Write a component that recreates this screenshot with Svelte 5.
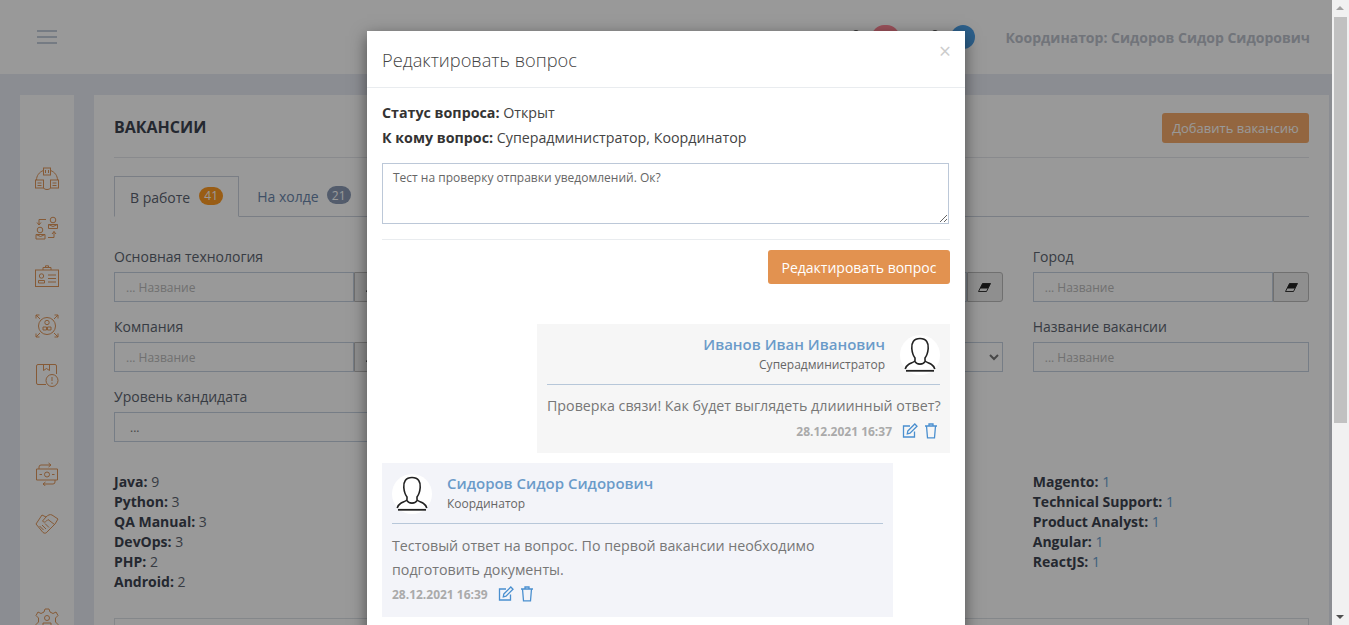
<script>
	const tabs = [
		{ name: 'В работе', count: 41, active: true },
		{ name: 'На холде', count: 21, active: false }
	];
	const statsLeft = [
		['Java', 9],
		['Python', 3],
		['QA Manual', 3],
		['DevOps', 3],
		['PHP', 2],
		['Android', 2]
	];
	const statsRight = [
		['Magento', 1],
		['Technical Support', 1],
		['Product Analyst', 1],
		['Angular', 1],
		['ReactJS', 1]
	];
</script>

{#snippet eraser()}
	<svg class="eraser" viewBox="0 0 13 9" width="13" height="9">
		<path d="M4.5 .5 H12.5 L8.5 8.5 H.5 Z" fill="none" stroke="currentColor" stroke-width=".9" />
		<path d="M4.5 .5 H12.5 L10 5.5 H2 Z" fill="currentColor" />
	</svg>
{/snippet}

{#snippet person()}
	<svg viewBox="0 0 40 40" width="40" height="40">
		<circle cx="20" cy="20" r="20" fill="#fff" />
		<path d="M20 3.5 C13.5 3.5 11.3 8 11.8 13.5 C12.2 18 13.4 21 15 23 L15 25.5 C15 26.8 11 28 8.5 29.5 C6.8 30.5 5.8 32 5.2 34 M20 3.5 C26.5 3.5 28.7 8 28.2 13.5 C27.8 18 26.6 21 25 23 L25 25.5 C25 26.8 29 28 31.5 29.5 C33.2 30.5 34.2 32 34.8 34 M15 26.5 C16.5 30 23.5 30 25 26.5" fill="none" stroke="#222" stroke-width="1.6" />
		<path d="M6 35.8 H34" stroke="#222" stroke-width="1.8" />
	</svg>
{/snippet}

{#snippet actions()}
	<svg viewBox="0 0 16 16" width="16" height="16" class="act">
		<path d="M12.5 8.5 V14 H1.5 V3 H8" fill="none" stroke="currentColor" stroke-width="1.3" />
		<path d="M5.8 8 L12.8 1 L15 3.2 L8 10.2 L5.3 10.8 Z" fill="none" stroke="currentColor" stroke-width="1.3" />
	</svg>
	<svg viewBox="0 0 14 16" width="14" height="16" class="act">
		<path d="M1 3 H13 M5 3 V1 H9 V3 M2.5 3 L3.5 14.8 H10.5 L11.5 3" fill="none" stroke="currentColor" stroke-width="1.3" />
	</svg>
{/snippet}

<div class="root">
	<div class="page">
		<header class="topbar">
			<div class="burger"><span></span><span></span><span></span></div>
			<div class="top-right">
				<span class="dot"></span>
				<span class="pill red"></span>
				<span class="dot second"></span>
				<span class="pill blue"></span>
				<span class="user">Координатор: Сидоров Сидор Сидорович</span>
			</div>
		</header>

		<div class="content">
			<aside class="sidebar">
				<div class="nav-group">
					<div class="nav-item">
						<svg viewBox="0 0 24 24" width="24" height="24">
							<rect x="8.5" y="1" width="7" height="7" />
							<rect x="0.5" y="13" width="8" height="8" />
							<rect x="15.5" y="13" width="8" height="8" />
							<path d="M8.5 3.5 C4 5 1.5 9 1.5 13 M15.5 3.5 C20 5 22.5 9 22.5 13 M8.5 21 C10 23 14 23 15.5 21 M10.5 3 V6 M13.5 3 V6 M2.5 16 H6.5 M2.5 18.5 H6.5 M17.5 16 H21.5 M17.5 18.5 H21.5" />
						</svg>
					</div>
					<div class="nav-item">
						<svg viewBox="0 0 24 24" width="24" height="24">
							<circle cx="18" cy="4" r="2.8" />
							<path d="M13.5 8.5 H22.5 V12.5 H13.5 Z M13.5 8.5 L18 10.5 L22.5 8.5" />
							<circle cx="5" cy="14" r="2.8" />
							<path d="M1 18.5 H10 V23 H1 Z M1 18.5 L5.5 20.5 L10 18.5" />
							<path d="M11 3.5 H4 V9 M2 6.5 L4 9 L6 6.5" />
							<path d="M13 21.5 H19 V15.5 M17 18 L19 15.5 L21 18" />
						</svg>
					</div>
					<div class="nav-item">
						<svg viewBox="0 0 24 24" width="24" height="24">
							<rect x="0.5" y="5" width="23" height="16.5" />
							<path d="M8 5 V2.5 H16 V5 M10.5 2.5 V0.8 H13.5 V2.5" />
							<circle cx="6.5" cy="11" r="2.2" />
							<path d="M3.5 18 V15.5 H9.5 V18 Z M13 10 H21 M13 13.5 H21 M13 17 H21" />
						</svg>
					</div>
					<div class="nav-item">
						<svg viewBox="0 0 24 24" width="24" height="24">
							<circle cx="12" cy="12" r="8.5" />
							<circle cx="12" cy="8.5" r="2.2" />
							<path d="M8 16 V13 H11.5 V16 Z M12.5 16 V13 H16 V16 Z" />
							<path d="M1 1 L5 5 M1 4.5 V1 H4.5 M23 1 L19 5 M23 4.5 V1 H19.5 M1 23 L5 19 M1 19.5 V23 H4.5 M23 23 L19 19 M23 19.5 V23 H19.5" />
						</svg>
					</div>
					<div class="nav-item">
						<svg viewBox="0 0 24 24" width="24" height="24">
							<path d="M11 21.5 H3 Q1.5 21.5 1.5 20 V3 Q1.5 1.5 3 1.5 H20 Q21.5 1.5 21.5 3 V11" />
							<path d="M8.5 1.5 V7.5 L11.5 5.5 L14.5 7.5 V1.5" />
							<circle cx="17" cy="17.5" r="6" />
							<path d="M17 14 V18 M17 19.5 V21" />
						</svg>
					</div>
				</div>
				<div class="nav-group second">
					<div class="nav-item">
						<svg viewBox="0 0 24 24" width="24" height="24">
							<path d="M1.5 7 H22.5 V18 H1.5 Z" />
							<circle cx="12" cy="12.5" r="2.5" />
							<path d="M4.5 12.5 H7 M17 12.5 H19.5" />
							<path d="M4 7 V5 Q4 3 6 3 H16 M13.5 1 L16 3 L13.5 5 M20 18 V20 Q20 22 18 22 H8 M10.5 20 L8 22 L10.5 24" />
						</svg>
					</div>
					<div class="nav-item">
						<svg viewBox="0 0 24 24" width="24" height="24">
							<path d="M1 13 L7 4 L11 6 C13 4 15 3 17 4 L23 8 L20 13 L12 21 C11 22.5 9.5 22.5 8 21.5 Z" />
							<path d="M11 6 L7.5 10 C8.5 11.5 10 11.5 11.5 10 L13 8.5 L19.5 13.5 M4.5 15 L8.5 19 M7 14 L11 18 M10 12.5 L14 16.5" />
						</svg>
					</div>
				</div>
				<div class="nav-group third">
					<div class="nav-item">
						<svg viewBox="0 0 24 24" width="24" height="24">
							<path d="M10 1 H14 L15 4 L18 5.5 L21 4 L23 7.5 L20.5 10 V14 L23 16.5 L21 20 L18 18.5 L15 20 L14 23 H10 L9 20 L6 18.5 L3 20 L1 16.5 L3.5 14 V10 L1 7.5 L3 4 L6 5.5 L9 4 Z" />
							<circle cx="12" cy="10" r="2.5" />
							<path d="M8 19 V15 H16 V19" />
						</svg>
					</div>
				</div>
			</aside>

			<main class="panel">
				<div class="panel-head">
					<h1>ВАКАНСИИ</h1>
					<button class="add-btn">Добавить вакансию</button>
				</div>

				<div class="tabs">
					{#each tabs as tab}
						<div class="tab" class:active={tab.active}>
							{tab.name}
							<span class="badge" class:orange={tab.active}>{tab.count}</span>
						</div>
					{/each}
				</div>

				<div class="filters">
					<div class="field">
						<span class="label">Основная технология</span>
						<div class="group">
							<input placeholder="... Название" />
							<button class="clear">{@render eraser()}</button>
						</div>
					</div>
					<div class="field">
						<span class="label">&nbsp;</span>
						<div class="group">
							<input placeholder="... Название" />
							<button class="clear">{@render eraser()}</button>
						</div>
					</div>
					<div class="field">
						<span class="label">&nbsp;</span>
						<div class="group">
							<input placeholder="... Название" />
							<button class="clear">{@render eraser()}</button>
						</div>
					</div>
					<div class="field">
						<span class="label">Город</span>
						<div class="group">
							<input placeholder="... Название" />
							<button class="clear">{@render eraser()}</button>
						</div>
					</div>

					<div class="field">
						<span class="label">Компания</span>
						<div class="group">
							<input placeholder="... Название" />
							<button class="clear">{@render eraser()}</button>
						</div>
					</div>
					<div class="field">
						<span class="label">&nbsp;</span>
						<input placeholder="... Название" />
					</div>
					<div class="field">
						<span class="label">&nbsp;</span>
						<select><option>...</option></select>
					</div>
					<div class="field">
						<span class="label">Название вакансии</span>
						<input placeholder="... Название" />
					</div>

					<div class="field">
						<span class="label">Уровень кандидата</span>
						<select><option>...</option></select>
					</div>
				</div>

				<div class="stats">
					<div>
						{#each statsLeft as [name, n]}
							<div class="stat"><b>{name}:</b> {n}</div>
						{/each}
					</div>
					<div></div>
					<div></div>
					<div>
						{#each statsRight as [name, n]}
							<div class="stat"><b>{name}:</b> <span class="num">{n}</span></div>
						{/each}
					</div>
				</div>

				<div class="table-top"></div>
			</main>
		</div>

		<div class="overlay">
			<div class="modal">
				<div class="modal-head">
					<h2>Редактировать вопрос</h2>
					<span class="close">×</span>
				</div>
				<div class="modal-body">
					<p class="info"><b>Статус вопроса:</b> Открыт</p>
					<p class="info"><b>К кому вопрос:</b> Суперадминистратор, Координатор</p>
					<textarea>Тест на проверку отправки уведомлений. Ок?</textarea>
					<div class="sep"></div>
					<div class="submit-row">
						<button class="submit">Редактировать вопрос</button>
					</div>

					<div class="msg own">
						<div class="msg-head end">
							<div class="who right">
								<a href="#top">Иванов Иван Иванович</a>
								<span>Суперадминистратор</span>
							</div>
							{@render person()}
						</div>
						<p class="msg-text">Проверка связи! Как будет выглядеть длииинный ответ?</p>
						<div class="meta end">
							<span class="date">28.12.2021 16:37</span>
							{@render actions()}
						</div>
					</div>

					<div class="msg other">
						<div class="msg-head">
							{@render person()}
							<div class="who">
								<a href="#top">Сидоров Сидор Сидорович</a>
								<span>Координатор</span>
							</div>
						</div>
						<p class="msg-text">Тестовый ответ на вопрос. По первой вакансии необходимо подготовить документы.</p>
						<div class="meta">
							<span class="date">28.12.2021 16:39</span>
							{@render actions()}
						</div>
					</div>
				</div>
			</div>
		</div>
	</div>

	<div class="scrollbar">
		<span class="arrow up"></span>
		<div class="thumb"></div>
		<span class="arrow down"></span>
	</div>
</div>

<style>
	:global(body) {
		overflow: hidden;
		font-family: "Open Sans", sans-serif;
		font-size: 14px;
		color: #343a40;
	}
	.root {
		display: flex;
		height: 100vh;
		overflow: hidden;
	}
	.page {
		flex: 1;
		min-width: 0;
		position: relative;
		overflow: hidden;
		background: #e8ebf3;
	}
	.scrollbar {
		width: 17px;
		background: #f1f1f1;
		display: flex;
		flex-direction: column;
		align-items: center;
		position: relative;
	}
	.thumb {
		width: 13px;
		height: 406px;
		margin-top: 17px;
		background: #c1c1c1;
	}
	.arrow {
		position: absolute;
		left: 4px;
		border-left: 4px solid transparent;
		border-right: 4px solid transparent;
	}
	.arrow.up {
		top: 6px;
		border-bottom: 4px solid #a3a3a3;
	}
	.arrow.down {
		bottom: 6px;
		border-top: 4px solid #505050;
	}

	.topbar {
		height: 74px;
		background: #fff;
		display: flex;
		align-items: center;
		justify-content: space-between;
		padding: 0 22px 0 37px;
		box-sizing: border-box;
	}
	.burger {
		width: 20px;
		display: flex;
		flex-direction: column;
		gap: 4px;
	}
	.burger span {
		height: 2px;
		background: #c3cedb;
	}
	.top-right {
		display: flex;
		align-items: center;
	}
	.dot {
		width: 6px;
		height: 14px;
		border-radius: 3px;
		background: #555;
	}
	.dot.second {
		margin-left: 33px;
	}
	.pill {
		height: 24px;
		border-radius: 12px;
		margin-left: 13px;
	}
	.pill.red {
		width: 27px;
		background: #ff8595;
	}
	.pill.blue {
		width: 24px;
		background: #4ba0e8;
	}
	.user {
		margin-left: 30px;
		font-weight: 700;
		color: #bcc2cc;
	}

	.content {
		display: flex;
		gap: 20px;
		padding: 21px 3px 0 20px;
	}
	.sidebar {
		width: 54px;
		height: 560px;
		background: #fdfefe;
		padding-top: 59px;
		box-sizing: border-box;
		flex: none;
	}
	.nav-item {
		height: 49px;
		display: flex;
		align-items: center;
		justify-content: center;
	}
	.nav-item svg {
		fill: none;
		stroke: #e0965a;
		stroke-width: 1;
	}
	.nav-group.second {
		margin-top: 50px;
	}
	.nav-group.third {
		margin-top: 48px;
	}

	.panel {
		flex: 1;
		min-width: 0;
		background: #fff;
		padding: 18px 20px 0;
		height: 560px;
		box-sizing: border-box;
	}
	.panel-head {
		display: flex;
		justify-content: space-between;
		align-items: center;
		padding-bottom: 14px;
		border-bottom: 1px solid #e4e7ec;
	}
	.panel-head h1 {
		margin: -2px 0 0;
		font-size: 16px;
		font-weight: 700;
		color: #3d4450;
	}
	.add-btn {
		height: 30px;
		width: 147px;
		border: 0;
		border-radius: 3px;
		background: #f5ab6b;
		color: #fff;
		font: 13px "Open Sans", sans-serif;
		padding: 0;
	}
	.tabs {
		display: flex;
		margin-top: 18px;
		height: 40px;
		border-bottom: 1px solid #ccd3de;
	}
	.tab {
		display: flex;
		align-items: center;
		gap: 8px;
		padding: 1px 16px 0 15px;
		height: 40px;
		box-sizing: border-box;
		color: #6a85ab;
		border: 1px solid transparent;
		margin-right: 2px;
	}
	.tab.active {
		color: #5a6270;
		background: #fff;
		border-color: #ccd3de;
		border-bottom-color: #fff;
		height: 41px;
		padding-right: 15px;
	}
	.badge {
		height: 18px;
		min-width: 24px;
		border-radius: 9px;
		background: #8a9ab5;
		color: #fff;
		font-size: 12px;
		display: flex;
		align-items: center;
		justify-content: center;
		margin-top: -3px;
	}
	.badge.orange {
		background: #ff9c24;
		margin-left: 1px;
	}

	.filters {
		display: grid;
		grid-template-columns: repeat(4, minmax(0, 1fr));
		column-gap: 30px;
		row-gap: 15px;
		margin-top: 30px;
	}
	.field {
		display: flex;
		flex-direction: column;
	}
	.label {
		height: 20px;
		line-height: 20px;
		color: #5c6470;
		margin-bottom: 5px;
	}
	.group {
		display: flex;
	}
	input,
	select {
		height: 30px;
		width: 100%;
		min-width: 0;
		box-sizing: border-box;
		border: 1px solid #c5d0e0;
		border-radius: 0;
		background: #fff;
		padding: 0 11px;
		font: 12px "Open Sans", sans-serif;
		color: #777;
		outline: none;
	}
	input::placeholder {
		color: #bbb;
		opacity: 1;
	}
	.clear {
		width: 36px;
		flex: none;
		height: 30px;
		background: #eee;
		border: 1px solid #bbb;
		border-radius: 0 3px 3px 0;
		padding: 0;
		color: #222;
		display: flex;
		align-items: center;
		justify-content: center;
	}

	.stats {
		display: grid;
		grid-template-columns: repeat(4, minmax(0, 1fr));
		column-gap: 30px;
		margin-top: 30px;
		line-height: 20px;
	}
	.stat {
		color: #5c6470;
		height: 20px;
	}
	.stat b {
		color: #3d4450;
	}
	.num {
		color: #6a9fd0;
	}
	.table-top {
		margin-top: 26px;
		height: 40px;
		border: 1px solid #dde1e7;
	}

	.overlay {
		position: absolute;
		inset: 0;
		background: rgba(0, 0, 0, 0.4);
		overflow: hidden;
	}
	.modal {
		width: 598px;
		margin: 31px auto 0;
		background: #fff;
		box-shadow: 0 5px 15px rgba(0, 0, 0, 0.5);
		min-height: 700px;
	}
	.modal-head {
		height: 57px;
		box-sizing: border-box;
		border-bottom: 1px solid #e9ecef;
		padding: 0 15px;
		display: flex;
		align-items: center;
		justify-content: space-between;
	}
	.modal-head h2 {
		margin: 0;
		font-size: 18.25px;
		font-weight: 300;
		color: #444;
	}
	.close {
		font-size: 21px;
		color: #ccc;
		line-height: 1;
		margin: -15px -1px 0 0;
	}
	.modal-body {
		padding: 15px 15px;
		display: flex;
		flex-direction: column;
	}
	.info {
		margin: 0 0 5px;
		line-height: 20px;
		font-size: 14.25px;
		color: #444;
	}
	.info b {
		color: #333;
	}
	textarea {
		display: block;
		width: 567px;
		height: 61px;
		margin-top: 10px;
		box-sizing: border-box;
		border: 1px solid #bcc8d8;
		border-radius: 0;
		padding: 6px 10px;
		font: 12px/1.4 "Open Sans", sans-serif;
		color: #666;
		outline: none;
	}
	.sep {
		height: 1px;
		background: #e9ecef;
		margin-top: 15px;
	}
	.submit-row {
		display: flex;
		justify-content: flex-end;
		margin-top: 10px;
	}
	.submit {
		width: 182px;
		height: 34px;
		border: 0;
		border-radius: 3px;
		background: #e29250;
		color: #fff;
		font: 14px "Open Sans", sans-serif;
		padding: 0;
	}
	.msg {
		box-sizing: border-box;
		padding: 11px 10px 0;
	}
	.msg.own {
		width: 413px;
		height: 129px;
		margin-top: 40px;
		align-self: flex-end;
		background: #f6f6f6;
	}
	.msg.other {
		width: 511px;
		height: 154px;
		margin-top: 10px;
		background: #f3f4f9;
	}
	.msg-head {
		display: flex;
		gap: 15px;
		padding-bottom: 9px;
		border-bottom: 1px solid #b7c7d9;
	}
	.msg-head.end {
		justify-content: flex-end;
	}
	.who {
		display: flex;
		flex-direction: column;
	}
	.who.right {
		align-items: flex-end;
	}
	.who a {
		font-size: 15px;
		font-weight: 600;
		line-height: 20px;
		margin-top: -1px;
		color: #6b9bc9;
		text-decoration: none;
	}
	.who span {
		font-size: 12px;
		line-height: 20px;
		margin-top: 1px;
		color: #666;
	}
	.msg-text {
		margin: 9px 0 0;
		line-height: 24px;
		font-size: 14.25px;
		color: #777;
	}
	.own .msg-text {
		white-space: nowrap;
	}
	.other .msg-text {
		margin-top: 10px;
	}
	.meta {
		display: flex;
		align-items: center;
		gap: 6px;
		margin-top: 4px;
		height: 18px;
	}
	.other .meta {
		margin-top: 3px;
	}
	.meta.end {
		justify-content: flex-end;
		padding-right: 2px;
	}
	.date {
		font-size: 12px;
		font-weight: 700;
		color: #aaa;
		margin-right: 4px;
	}
	.act {
		color: #4a8fcf;
		flex: none;
	}
</style>
